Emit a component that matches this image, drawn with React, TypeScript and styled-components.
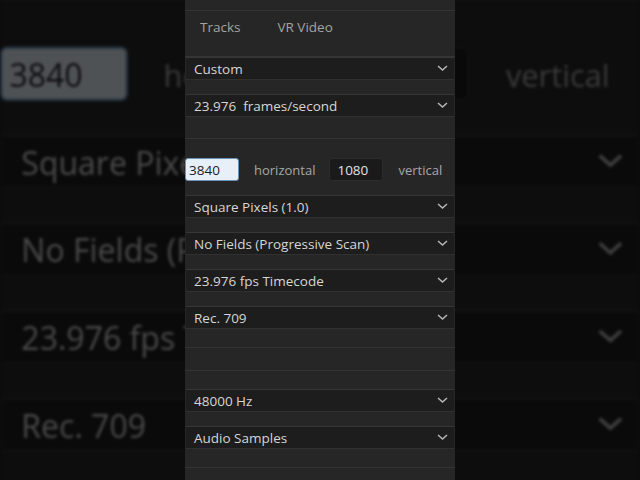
import React from 'react'
import styled, {createGlobalStyle} from 'styled-components'

const GlobalStyle = createGlobalStyle`
  html, body {
    margin: 0;
    padding: 0;
    background: #0c0c0c;
  }
  * {
    box-sizing: border-box;
  }
`

const Stage = styled.div`
  position: relative;
  width: 640px;
  height: 480px;
  overflow: hidden;
  background: #0c0c0c;
  display: flex;
  justify-content: center;
  font-family: 'Open Sans', 'Noto Sans', sans-serif;
`

// blurred, zoomed copy of the panel that fills the sides of the frame
const Backdrop = styled.div`
  position: absolute;
  inset: 0;
  overflow: hidden;
  pointer-events: none;
`

const Zoomed = styled.div`
  width: 270px;
  transform-origin: 0 0;
  transform: translate(0, -328px) scale(2.3704);
  filter: brightness(0.34) blur(0.6px);
`

const PanelBox = styled.div`
  position: relative;
  width: 270px;
  height: 480px;
  flex-shrink: 0;
  background: #262626;
  display: flex;
  flex-direction: column;
  overflow: hidden;
`

const TopStrip = styled.div`
  height: 11px;
  border-bottom: 1px solid #343434;
`

const Tabs = styled.div`
  height: 46px;
  display: flex;
  align-items: flex-start;
  gap: 37px;
  padding: 7px 0 0 15px;
  border-bottom: 1px solid #343434;
  color: #a3a3a3;
  font-size: 13.5px;
`

const Group = styled.div<{$top?: number}>`
  display: flex;
  flex-direction: column;
  gap: 14px;
  margin-top: ${p => p.$top ?? 0}px;
`

const Divider = styled.div<{$top: number}>`
  margin-top: ${p => p.$top}px;
  height: 1px;
  background: #333;
`

const Dropdown = styled.div`
  height: 23px;
  margin: 0 1px;
  display: flex;
  align-items: center;
  justify-content: space-between;
  padding: 0 6px 0 8px;
  background: #1d1d1d;
  border-top: 1px solid #363636;
  border-bottom: 1px solid #303030;
  color: #d6d6d6;
  font-size: 13.5px;
  white-space: pre;
`

const SizeRow = styled.div`
  display: flex;
  align-items: center;
  margin-top: 19px;
  margin-bottom: 14px;
  height: 23px;
  font-size: 13.5px;
  white-space: nowrap;
`

const NumberBox = styled.div<{$active?: boolean}>`
  width: 54px;
  height: 23px;
  flex-shrink: 0;
  display: flex;
  align-items: center;
  padding-left: ${p => (p.$active ? 3 : 7)}px;
  border-radius: 3px;
  background: ${p => (p.$active ? '#e7f0f9' : '#1a1a1a')};
  border: 1px solid ${p => (p.$active ? '#6c93b8' : '#2c2c2c')};
  color: ${p => (p.$active ? '#1c1c1c' : '#e2e2e2')};
`

const Unit = styled.span`
  color: #a8a8a8;
  margin: 0 14px 0 15px;
  font-size: 13px;
`

const Chevron = () => (
  <svg width="11" height="7" viewBox="0 0 11 7">
    <polyline points="1,1 5.5,5 10,1" fill="none" stroke="#b8b8b8" strokeWidth="1.5" />
  </svg>
)

const Select = ({label}: {label: string}) => (
  <Dropdown>
    <span>{label}</span>
    <Chevron />
  </Dropdown>
)

const Panel = () => (
  <PanelBox>
    <TopStrip />
    <Tabs>
      <span>Tracks</span>
      <span>VR Video</span>
    </Tabs>
    <Group>
      <Select label="Custom" />
      <Select label="23.976  frames/second" />
    </Group>
    <Divider $top={21} />
    <SizeRow>
      <NumberBox $active>3840</NumberBox>
      <Unit>horizontal</Unit>
      <NumberBox>1080</NumberBox>
      <Unit>vertical</Unit>
    </SizeRow>
    <Group>
      <Select label="Square Pixels (1.0)" />
      <Select label="No Fields (Progressive Scan)" />
      <Select label="23.976 fps Timecode" />
      <Select label="Rec. 709" />
    </Group>
    <Divider $top={18} />
    <Divider $top={22} />
    <Group $top={18}>
      <Select label="48000 Hz" />
      <Select label="Audio Samples" />
    </Group>
    <Divider $top={18} />
  </PanelBox>
)

export default function App() {
  return (
    <>
      <GlobalStyle />
      <Stage>
        <Backdrop aria-hidden>
          <Zoomed>
            <Panel />
          </Zoomed>
        </Backdrop>
        <Panel />
      </Stage>
    </>
  )
}
